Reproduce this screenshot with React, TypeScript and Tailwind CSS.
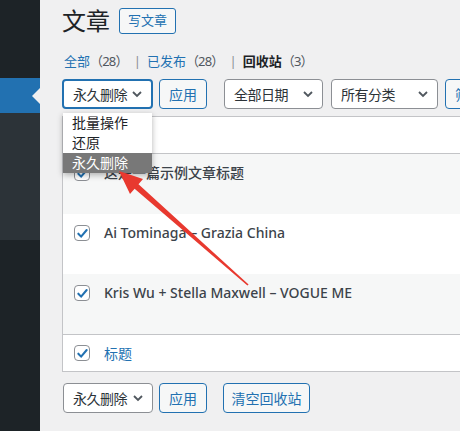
import type { ReactNode } from "react";

const font = { fontFamily: '"Noto Sans", "Noto Sans CJK SC", sans-serif' };

function Chevron() {
  return (
    <svg width="16" height="16" viewBox="0 0 16 16" className="shrink-0">
      <path d="M4 6l4 4 4-4" fill="none" stroke="#50575e" strokeWidth="1.8" />
    </svg>
  );
}

function Select({
  label,
  width,
  focused,
}: {
  label: string;
  width: string;
  focused?: boolean;
}) {
  return (
    <div
      className={`${width} h-[30px] flex items-center justify-between rounded-[4px] bg-white pl-[9px] pr-[6px] text-[14px] text-[#2c3338] ${
        focused ? "border-2 border-[#2271b1]" : "border border-[#8c8f94]"
      }`}
    >
      <span className="tracking-[-0.5px]">{label}</span>
      <Chevron />
    </div>
  );
}

function Button({ children, width }: { children: ReactNode; width: string }) {
  return (
    <div
      className={`${width} h-[30px] flex items-center justify-center rounded-[4px] border border-[#2271b1] bg-[#f6f7f7] text-[14px] text-[#2271b1]`}
    >
      {children}
    </div>
  );
}

function Check() {
  return (
    <div className="w-[16px] h-[16px] shrink-0 rounded-[4px] border border-[#8c8f94] bg-white flex items-center justify-center">
      <svg width="13" height="13" viewBox="0 0 14 14">
        <path
          d="M2.5 7.2l3 3.2 6-7.2"
          fill="none"
          stroke="#2271b1"
          strokeWidth="2.2"
          strokeLinecap="round"
          strokeLinejoin="round"
        />
      </svg>
    </div>
  );
}

const rows = [
  { title: "这是一篇示例文章标题", bg: "bg-[#f6f7f7]" },
  { title: "Ai Tominaga – Grazia China", bg: "bg-white" },
  { title: "Kris Wu + Stella Maxwell – VOGUE ME", bg: "bg-[#f6f7f7]" },
];

export default function App() {
  return (
    <div className="relative flex h-[431px] w-[460px] overflow-hidden bg-[#f0f0f1]" style={font}>
      {/* admin menu */}
      <div className="w-[40px] shrink-0 flex flex-col bg-[#1d2327]">
        <div className="h-[78px]" />
        <div className="relative h-[35px] bg-[#2271b1]">
          <div className="absolute right-0 top-[10px] w-0 h-0 border-y-[8px] border-y-transparent border-r-[8px] border-r-[#f0f0f1]" />
        </div>
        <div className="h-[127px] bg-[#2c3338]" />
      </div>

      {/* content */}
      <div className="flex-1 pl-[22px] overflow-hidden">
        <div className="mt-[8px] flex items-center gap-[9px]">
          <h1 className="text-[24px] leading-[26px] text-[#1d2327]">文章</h1>
          <div className="h-[26px] px-[8px] flex items-center rounded-[3px] border border-[#2271b1] bg-[#f6f7f7] text-[13px] text-[#2271b1]">
            写文章
          </div>
        </div>

        <div className="mt-[17px] flex items-center text-[13px] leading-[20px] whitespace-nowrap">
          <span className="text-[#2271b1] pl-[2px]">全部</span>
          <span className="text-[#50575e] tracking-[-0.8px]">（28）</span>
          <span className="text-[#8c8f94] px-[6px]">|</span>
          <span className="text-[#2271b1]">已发布</span>
          <span className="text-[#50575e] tracking-[-0.8px]">（28）</span>
          <span className="text-[#8c8f94] px-[6px]">|</span>
          <span className="font-semibold text-[#1d2327]">回收站</span>
          <span className="text-[#50575e] tracking-[-0.8px]">（3）</span>
        </div>

        <div className="relative mt-[8px] flex items-center whitespace-nowrap">
          <div className="relative">
            <Select label="永久删除" width="w-[91px]" focused />
            <div className="absolute left-[1px] top-[34px] z-10 w-[89px] bg-white text-[14px] leading-[20px] shadow-[0_2px_6px_rgba(0,0,0,0.3)]">
              <div className="pl-[9px] text-[#1d2327]">批量操作</div>
              <div className="pl-[9px] text-[#1d2327]">还原</div>
              <div className="pl-[9px] bg-[#787878] text-white">永久删除</div>
            </div>
          </div>
          <div className="ml-[6px]">
            <Button width="w-[48px]">应用</Button>
          </div>
          <div className="ml-[17px]">
            <Select label="全部日期" width="w-[99px]" />
          </div>
          <div className="ml-[8px]">
            <Select label="所有分类" width="w-[107px]" />
          </div>
          <div className="ml-[7px]">
            <Button width="w-[48px]">筛选</Button>
          </div>
        </div>

        {/* table */}
        <div className="mt-[7px] w-[480px] border border-[#c3c4c7] bg-white">
          <div className="h-[37px] flex items-center gap-[14px] pl-[11px] border-b border-[#c3c4c7]">
            <Check />
            <span className="text-[14px] text-[#2271b1]">标题</span>
          </div>
          {rows.map((r) => (
            <div key={r.title} className={`${r.bg} h-[60px] flex items-start gap-[14px] pl-[11px] pt-[9px]`}>
              <div className="pt-[2px]">
                <Check />
              </div>
              <span className="text-[14px] leading-[20px] font-medium text-[#3c434a] whitespace-nowrap">
                {r.title}
              </span>
            </div>
          ))}
          <div className="h-[37px] flex items-center gap-[14px] pl-[11px] border-t border-[#c3c4c7]">
            <Check />
            <span className="text-[14px] text-[#2271b1]">标题</span>
          </div>
        </div>

        <div className="mt-[11px] flex items-center whitespace-nowrap">
          <div className="ml-[1px]">
            <Select label="永久删除" width="w-[90px]" />
          </div>
          <div className="ml-[6px]">
            <Button width="w-[48px]">应用</Button>
          </div>
          <div className="ml-[16px]">
            <Button width="w-[87px]">清空回收站</Button>
          </div>
        </div>
      </div>

      {/* red annotation arrow */}
      <svg className="absolute left-0 top-0 pointer-events-none z-20" width="460" height="431">
        <polygon
          points="119,171 143,179 138.5,184.3 248.6,284.4 247.4,285.6 134.6,188.7 130,194"
          fill="#e8392f"
        />
      </svg>
    </div>
  );
}
